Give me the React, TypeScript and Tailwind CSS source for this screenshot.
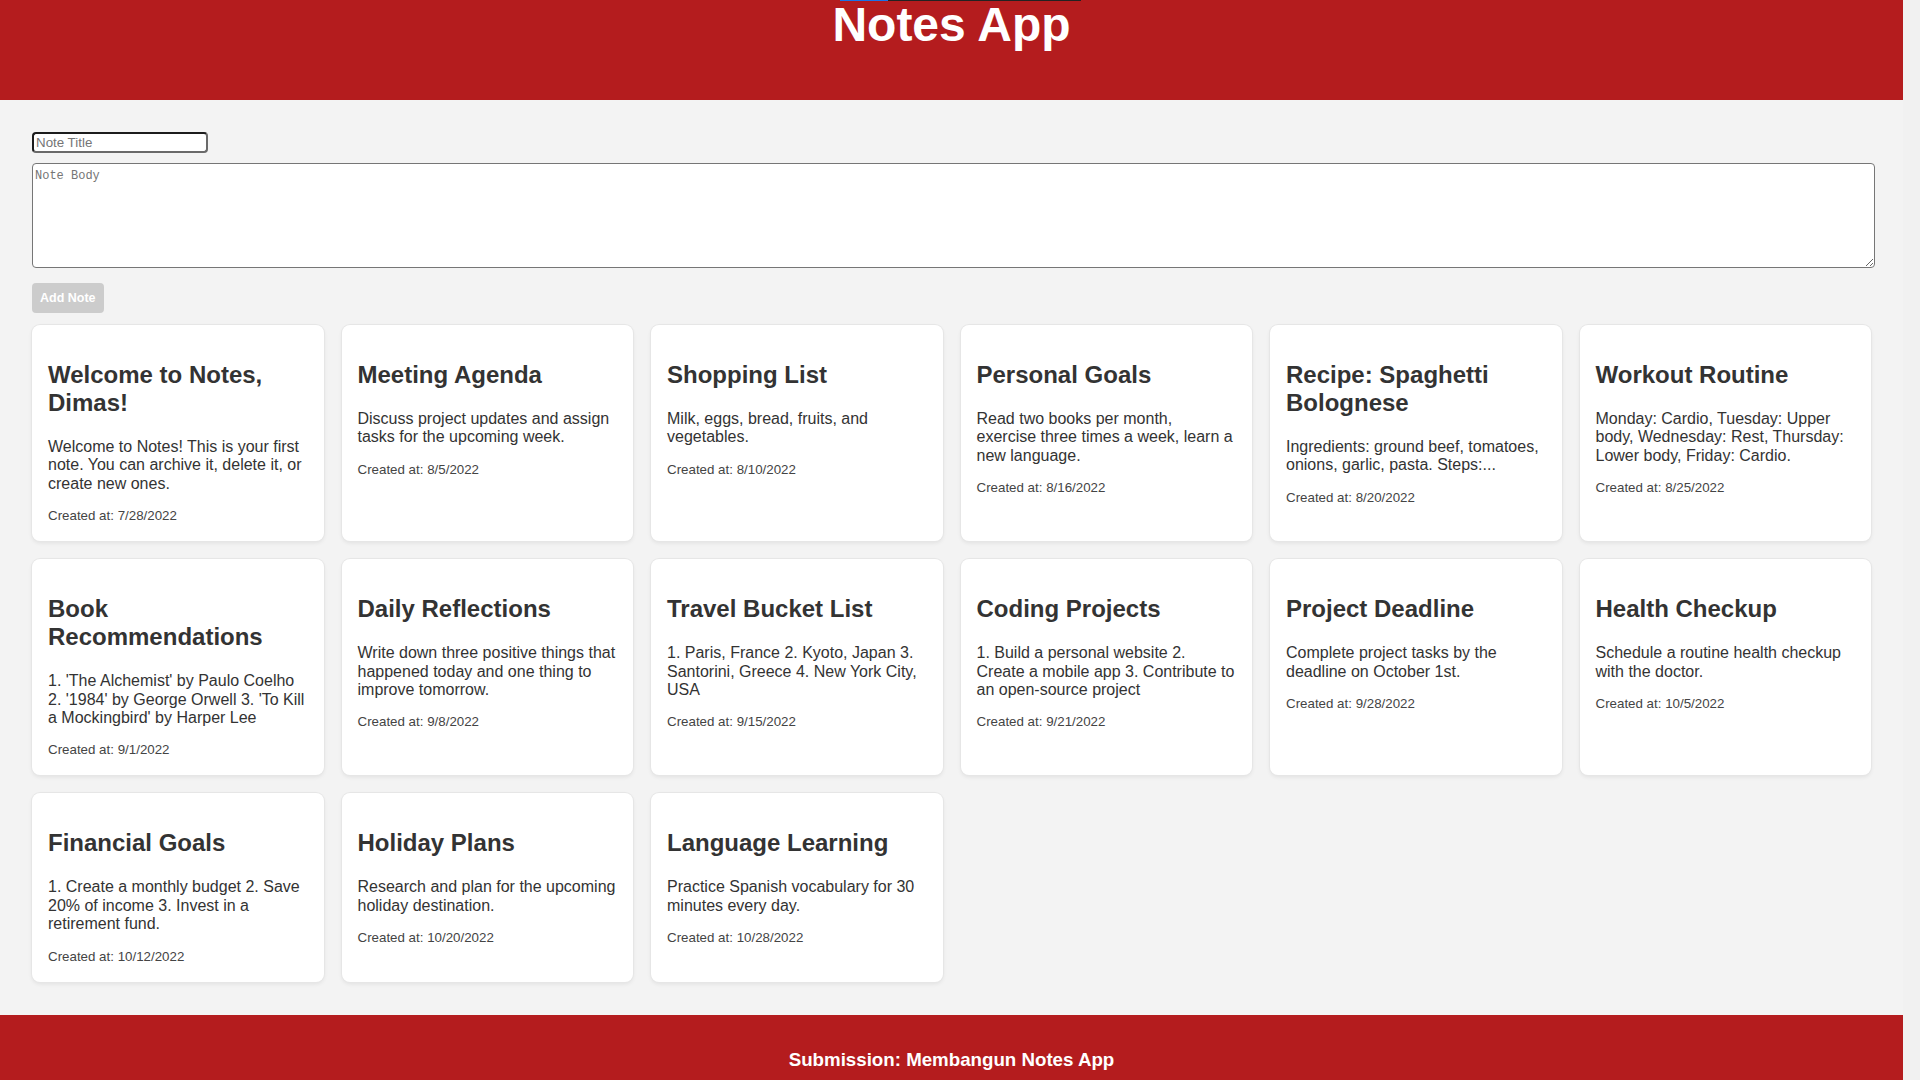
import { useState } from 'react'

type Note = {
  id: number
  title: string
  body: string
  createdAt: string
}

const initialNotes: Note[] = [
  { id: 1, title: 'Welcome to Notes, Dimas!', body: 'Welcome to Notes! This is your first note. You can archive it, delete it, or create new ones.', createdAt: '7/28/2022' },
  { id: 2, title: 'Meeting Agenda', body: 'Discuss project updates and assign tasks for the upcoming week.', createdAt: '8/5/2022' },
  { id: 3, title: 'Shopping List', body: 'Milk, eggs, bread, fruits, and vegetables.', createdAt: '8/10/2022' },
  { id: 4, title: 'Personal Goals', body: 'Read two books per month, exercise three times a week, learn a new language.', createdAt: '8/16/2022' },
  { id: 5, title: 'Recipe: Spaghetti Bolognese', body: 'Ingredients: ground beef, tomatoes, onions, garlic, pasta. Steps:...', createdAt: '8/20/2022' },
  { id: 6, title: 'Workout Routine', body: 'Monday: Cardio, Tuesday: Upper body, Wednesday: Rest, Thursday: Lower body, Friday: Cardio.', createdAt: '8/25/2022' },
  { id: 7, title: 'Book Recommendations', body: "1. 'The Alchemist' by Paulo Coelho 2. '1984' by George Orwell 3. 'To Kill a Mockingbird' by Harper Lee", createdAt: '9/1/2022' },
  { id: 8, title: 'Daily Reflections', body: 'Write down three positive things that happened today and one thing to improve tomorrow.', createdAt: '9/8/2022' },
  { id: 9, title: 'Travel Bucket List', body: '1. Paris, France 2. Kyoto, Japan 3. Santorini, Greece 4. New York City, USA', createdAt: '9/15/2022' },
  { id: 10, title: 'Coding Projects', body: '1. Build a personal website 2. Create a mobile app 3. Contribute to an open-source project', createdAt: '9/21/2022' },
  { id: 11, title: 'Project Deadline', body: 'Complete project tasks by the deadline on October 1st.', createdAt: '9/28/2022' },
  { id: 12, title: 'Health Checkup', body: 'Schedule a routine health checkup with the doctor.', createdAt: '10/5/2022' },
  { id: 13, title: 'Financial Goals', body: '1. Create a monthly budget 2. Save 20% of income 3. Invest in a retirement fund.', createdAt: '10/12/2022' },
  { id: 14, title: 'Holiday Plans', body: 'Research and plan for the upcoming holiday destination.', createdAt: '10/20/2022' },
  { id: 15, title: 'Language Learning', body: 'Practice Spanish vocabulary for 30 minutes every day.', createdAt: '10/28/2022' },
]

function NoteCard({ note }: { note: Note }) {
  return (
    <div className="bg-white rounded-lg shadow-[0_0_0_1px_#e6e6e6,0_2px_4px_rgba(0,0,0,0.08)] px-4 pt-4 pb-[18px] flex flex-col">
      <h2 className="text-[24px] leading-[28px] font-bold text-[#333] mt-[20px] mb-[21px]">{note.title}</h2>
      <p className="text-[16px] leading-[18.4px] text-[#333] mb-[15px]">{note.body}</p>
      <p className="text-[13.33px] leading-[15px] text-[#444]">Created at: {note.createdAt}</p>
    </div>
  )
}

export default function App() {
  const [notes] = useState<Note[]>(initialNotes)
  const [title, setTitle] = useState('')
  const [body, setBody] = useState('')

  return (
    <div className="min-h-screen bg-[#f1f1f1] font-['Liberation_Sans',Arial,sans-serif]">
      <div className="w-[1903px] min-h-screen bg-[#f3f3f3]">
        <header className="relative h-[100px] overflow-hidden bg-[#b41c1e] flex flex-col items-center">
          <div className="absolute top-0 left-[840px] w-[241px] h-px bg-[#222] flex">
            <div className="w-[48px] h-px bg-[#1a73e8]" />
          </div>
          <h1 className="mt-[-3px] text-[48px] leading-[55px] font-bold text-white">Notes App</h1>
        </header>

        <main className="px-8 pt-8 pb-[33px]">
          <input
            type="text"
            placeholder="Note Title"
            value={title}
            onChange={(e) => setTitle(e.target.value)}
            className="block w-[176px] h-[21px] px-[2px] bg-white text-[13.33px] border-2 border-t-[#1c1c1c] border-l-[#1c1c1c] border-r-[#6a6a6a] border-b-[#6a6a6a] rounded-[4px] placeholder:text-[#757575] outline-none"
          />
          <textarea
            placeholder="Note Body"
            value={body}
            onChange={(e) => setBody(e.target.value)}
            className="block mt-[10px] w-[calc(100%+4px)] h-[105px] px-[2px] py-[3px] bg-white border border-[#767676] rounded-[4px] font-['Liberation_Mono',monospace] text-[12px] placeholder:text-[#757575] outline-none"
          />
          <button
            disabled
            className="mt-[15px] h-[30px] px-2 bg-[#cccccc] text-white text-[12.5px] font-bold rounded-[4px]"
          >
            Add Note
          </button>

          <div className="mt-3 grid grid-cols-6 gap-[18px]">
            {notes.map((note) => (
              <NoteCard key={note.id} note={note} />
            ))}
          </div>
        </main>

        <footer className="bg-[#b41c1e] py-4 text-center">
          <h3 className="my-[18.72px] text-[18.72px] leading-[21.5px] font-bold text-white">Submission: Membangun Notes App</h3>
        </footer>
      </div>
    </div>
  )
}
